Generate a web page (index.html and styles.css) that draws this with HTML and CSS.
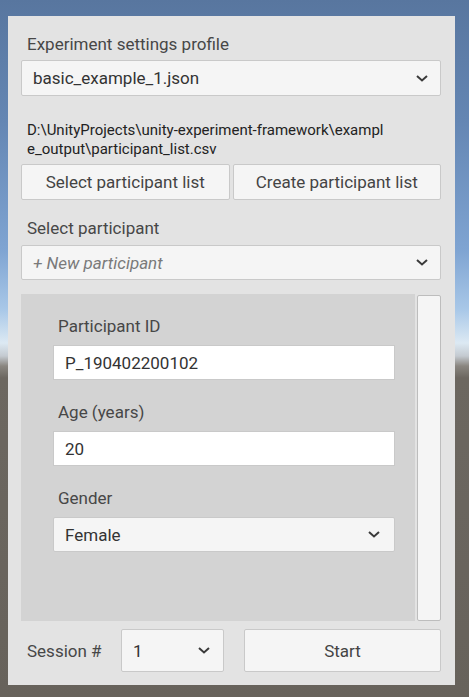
FILE: index.html
```html
<!DOCTYPE html>
<html>
<head>
<meta charset="utf-8">
<link rel="stylesheet" href="styles.css">
</head>
<body>
<div class="panel">
  <div class="label first">Experiment settings profile</div>
  <div class="select tall">
    <span>basic_example_1.json</span>
    <svg class="chev" width="14" height="9" viewBox="0 0 14 9"><path d="M2 2 L7 6.5 L12 2" fill="none" stroke="#3a3a3a" stroke-width="2"/></svg>
  </div>
  <div class="path">D:\UnityProjects\unity-experiment-framework\exampl<br>e_output\participant_list.csv</div>
  <div class="btnrow">
    <div class="btn">Select participant list</div>
    <div class="btn">Create participant list</div>
  </div>
  <div class="label second">Select participant</div>
  <div class="select">
    <span class="placeholder">+ New participant</span>
    <svg class="chev" width="14" height="9" viewBox="0 0 14 9"><path d="M2 2 L7 6.5 L12 2" fill="none" stroke="#3a3a3a" stroke-width="2"/></svg>
  </div>
  <div class="scrollwrap">
    <div class="scrollview">
      <div class="field-label">Participant ID</div>
      <div class="input">P_190402200102</div>
      <div class="field-label">Age (years)</div>
      <div class="input">20</div>
      <div class="field-label">Gender</div>
      <div class="select inner">
        <span>Female</span>
        <svg class="chev" width="14" height="9" viewBox="0 0 14 9"><path d="M2 2 L7 6.5 L12 2" fill="none" stroke="#3a3a3a" stroke-width="2"/></svg>
      </div>
    </div>
    <div class="scrollbar"></div>
  </div>
  <div class="bottom">
    <div class="session">Session #</div>
    <div class="select small">
      <span>1</span>
      <svg class="chev" width="14" height="9" viewBox="0 0 14 9"><path d="M2 2 L7 6.5 L12 2" fill="none" stroke="#3a3a3a" stroke-width="2"/></svg>
    </div>
    <div class="btn start">Start</div>
  </div>
</div>
</body>
</html>
```
FILE: styles.css
```css
html, body {
  margin: 0;
  padding: 0;
}
body {
  width: 469px;
  height: 697px;
  overflow: hidden;
  font-family: Roboto, "Noto Sans", sans-serif;
  background: linear-gradient(to bottom, #58769f 0px, #6486b3 120px, #7fa4d2 250px, #a9c8e8 310px, #dce9f3 343px, #c4cad0 356px, #8a8680 366px, #6c6760 378px, #67625b 697px);
}
.panel {
  position: relative;
  margin: 16px 0 0 8px;
  width: 447px;
  height: 669px;
  box-sizing: border-box;
  background: #e3e3e3;
  padding: 0 14px 0 13px;
  display: flex;
  flex-direction: column;
}
.label {
  font-size: 17px;
  line-height: 20px;
  color: #474747;
  padding-left: 6px;
}
.label.first { margin-top: 18px; }
.label.second { margin-top: 18px; }
.select {
  display: flex;
  align-items: center;
  justify-content: space-between;
  background: #f5f5f5;
  border: 1px solid #c9c9c9;
  border-radius: 2px;
  box-sizing: border-box;
  height: 35px;
  padding: 0 11px 0 11px;
  font-size: 17px;
  color: #333;
  margin-top: 7px;
}
.select.tall { height: 36px; margin-top: 6px; }
.placeholder {
  font-style: italic;
  color: #7a7a7a;
}
.path {
  margin-top: 25px;
  padding-left: 6px;
  font-size: 15px;
  line-height: 19px;
  color: #222;
}
.btnrow {
  display: flex;
  gap: 3px;
  margin-top: 5px;
}
.btn {
  flex: 1;
  height: 36px;
  box-sizing: border-box;
  background: #f5f5f5;
  border: 1px solid #c9c9c9;
  border-radius: 2px;
  display: flex;
  align-items: center;
  justify-content: center;
  font-size: 17px;
  color: #444;
}
.scrollwrap {
  display: flex;
  margin-top: 14px;
  height: 327px;
  gap: 2px;
}
.scrollview {
  flex: 1;
  background: #d3d3d3;
  padding: 22px 20px 0 32px;
  box-sizing: border-box;
}
.scrollbar {
  width: 24px;
  margin-top: 1px;
  box-sizing: border-box;
  background: #f5f5f5;
  border: 1px solid #bdbdbd;
  border-radius: 2px;
}
.field-label {
  font-size: 17px;
  line-height: 20px;
  color: #474747;
  padding-left: 5px;
  margin-bottom: 9px;
}
.input {
  height: 35px;
  box-sizing: border-box;
  background: #fff;
  border: 1px solid #c9c9c9;
  display: flex;
  align-items: center;
  padding-left: 11px;
  font-size: 17px;
  color: #333;
  margin-bottom: 22px;
}
.select.inner {
  margin-top: 0;
  height: 35px;
  padding-right: 13px;
}
.bottom {
  display: flex;
  align-items: center;
  margin-top: 8px;
  height: 43px;
}
.session {
  width: 101px;
  padding-left: 6px;
  box-sizing: border-box;
  font-size: 17px;
  color: #474747;
}
.select.small {
  margin-top: 0;
  width: 104px;
  height: 43px;
  padding-right: 12px;
}
.btn.start {
  flex: none;
  width: 197px;
  height: 43px;
  margin-left: 20px;
}
```
